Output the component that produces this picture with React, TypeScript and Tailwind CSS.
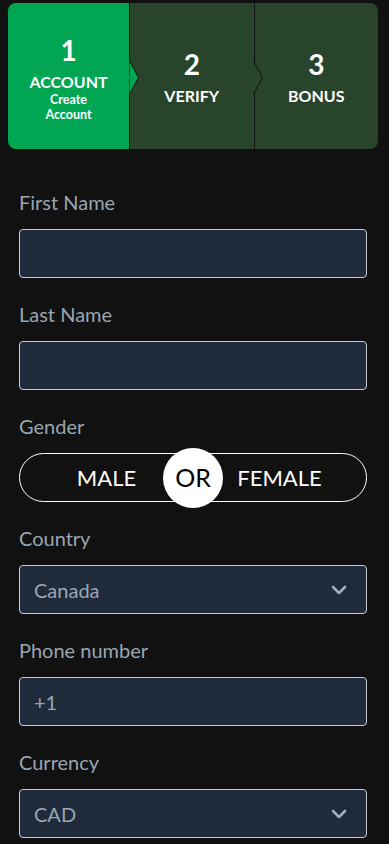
import { ChevronDown } from 'lucide-react';

const font = { fontFamily: 'Lato, "Noto Sans", sans-serif' };

function StepArrow({ fill }: { fill: string }) {
  return (
    <svg
      className="absolute top-[58px] -right-[10px] z-10"
      width="11"
      height="33"
      viewBox="0 0 11 33"
    >
      <path d="M0.5 0 L9.5 16.5 L0.5 33 Z" fill={fill} />
      <path d="M0.5 0 L9.5 16.5 L0.5 33" fill="none" stroke="#111111" strokeWidth="1" />
    </svg>
  );
}

function Field({ label, children }: { label: string; children: React.ReactNode }) {
  return (
    <div>
      <div className="text-[20px] leading-[22px] text-[#9aa5b1] mb-[16px]">{label}</div>
      {children}
    </div>
  );
}

function TextInput({ value }: { value?: string }) {
  return (
    <div className="h-[49px] rounded-[4px] border border-[#c9ccd1] bg-[#1f2a3b] flex items-center px-[14px] text-[20px] text-[#9aa5b1]">
      {value}
    </div>
  );
}

function Select({ value }: { value: string }) {
  return (
    <div className="h-[49px] rounded-[4px] border border-[#c9ccd1] bg-[#1f2a3b] flex items-center justify-between pl-[14px] pr-[15px] text-[20px] text-[#9aa5b1]">
      <span>{value}</span>
      <ChevronDown className="w-[24px] h-[24px] text-[#a3adb8]" strokeWidth={2.6} />
    </div>
  );
}

export default function App() {
  return (
    <div className="min-h-screen bg-[#111111] pb-6" style={font}>
      {/* Stepper */}
      <div className="pt-[3px] pl-2 pr-[11px]">
        <div className="flex h-[146px] rounded-[8px] overflow-hidden text-white font-bold">
          <div className="relative w-[122px] bg-[#00a651] flex flex-col items-center justify-center pt-1 border-r border-[#111111]">
            <div className="text-[28px] leading-8">1</div>
            <div className="text-[16px] leading-5 mt-[6px]">ACCOUNT</div>
            <div className="text-[12.5px] leading-[15px] text-center">
              Create
              <br />
              Account
            </div>
          </div>
          <div className="relative flex-1 bg-[#28442a] flex flex-col items-center justify-center pt-[2px] border-r border-[#111111]">
            <div className="text-[28px] leading-8">2</div>
            <div className="text-[16px] leading-5 mt-[6px]">VERIFY</div>
          </div>
          <div className="flex-1 bg-[#28442a] flex flex-col items-center justify-center pt-[2px]">
            <div className="text-[28px] leading-8">3</div>
            <div className="text-[16px] leading-5 mt-[6px]">BONUS</div>
          </div>
        </div>
      </div>
      <div className="relative pl-2 pr-[11px] -mt-[146px] h-[146px] pointer-events-none">
        <div className="relative h-full">
          <div className="absolute left-0 top-0 w-[122px] h-full">
            <StepArrow fill="#00a651" />
          </div>
          <div className="absolute left-[123px] top-0 w-[123px] h-full">
            <StepArrow fill="#28442a" />
          </div>
        </div>
      </div>

      {/* Form */}
      <div className="pl-[19px] pr-[22px] mt-[42px] flex flex-col gap-[25px]">
        <Field label="First Name">
          <TextInput />
        </Field>
        <Field label="Last Name">
          <TextInput />
        </Field>
        <Field label="Gender">
          <div className="relative h-[49px] rounded-full border border-white flex items-center text-white text-[22px]">
            <div className="flex-1 text-center">MALE</div>
            <div className="flex-1 text-center">FEMALE</div>
            <div className="absolute left-1/2 top-1/2 -translate-x-1/2 -translate-y-1/2 w-[60px] h-[60px] rounded-full bg-white text-black text-[25px] flex items-center justify-center">
              OR
            </div>
          </div>
        </Field>
        <Field label="Country">
          <Select value="Canada" />
        </Field>
        <Field label="Phone number">
          <TextInput value="+1" />
        </Field>
        <Field label="Currency">
          <Select value="CAD" />
        </Field>
      </div>
    </div>
  );
}
